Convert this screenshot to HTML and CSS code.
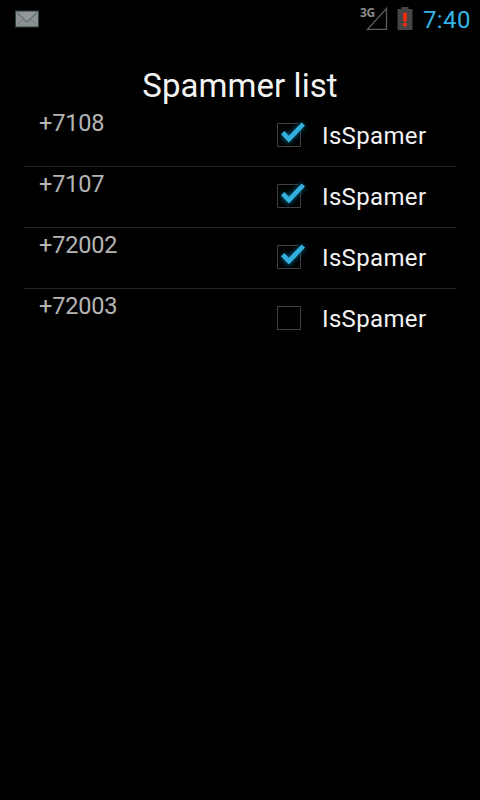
FILE: index.html
```html
<!DOCTYPE html>
<html lang="en">
<head>
<meta charset="utf-8">
<title>Spammer list</title>
<link rel="stylesheet" href="styles.css">
</head>
<body>
<svg class="defs" width="0" height="0" aria-hidden="true">
  <defs>
    <filter id="glow" x="-50%" y="-50%" width="200%" height="200%"><feGaussianBlur stdDeviation="2.6"/></filter>
    <symbol id="box" viewBox="0 0 48 48">
      <rect x="12.5" y="12.5" width="23" height="23" fill="none" stroke="#404040"/>
    </symbol>
    <symbol id="checked" viewBox="0 0 48 48">
      <path d="M35.5 20V35.5H12.5V12.5H33" fill="none" stroke="#404040"/>
      <path d="M18 22.5L23.5 28.5L38 13.5" fill="none" stroke="#08779f" stroke-width="6" opacity=".75" filter="url(#glow)"/>
      <path d="M17.7 21.7L23.9 28.2L38.3 13" fill="none" stroke="#33b0e0" stroke-width="4.7"/>
    </symbol>
  </defs>
</svg>
<header class="status">
  <svg class="mail" width="26" height="18" viewBox="0 0 26 18">
    <rect x="1.5" y="1" width="23" height="16" fill="#8b9090" stroke="#2c4344"/>
    <path d="M3 15L10 9M23 15L16 9" fill="none" stroke="#747c7c"/>
    <path d="M3 2.5L13 12L23 2.5" fill="#939898" stroke="#657071" stroke-width="1.2"/>
  </svg>
  <div class="signal">
    <span class="network">3G</span>
    <svg width="22" height="24" viewBox="0 0 22 24"><path d="M20.5 2.5V23.3H1.5Z" fill="none" stroke="#5c5c5c" stroke-width="1.3"/></svg>
  </div>
  <svg class="battery" width="16" height="24" viewBox="0 0 16 24">
    <path d="M4.5 0H11.5V2H15.5V23H.5V2H4.5Z" fill="#464444"/>
    <path d="M6 6H10L9.6 14.5H6.4ZM6.2 16H9.8V19.3H6.2Z" fill="#f52c0b"/>
  </svg>
  <span class="clock">7:40</span>
</header>
<main>
  <h1>Spammer list</h1>
  <ul class="list">
    <li><span class="phone">+7108</span><svg class="check"><use href="#checked"/></svg><span class="label">IsSpamer</span></li>
    <li><span class="phone">+7107</span><svg class="check"><use href="#checked"/></svg><span class="label">IsSpamer</span></li>
    <li><span class="phone">+72002</span><svg class="check"><use href="#checked"/></svg><span class="label">IsSpamer</span></li>
    <li><span class="phone">+72003</span><svg class="check"><use href="#box"/></svg><span class="label">IsSpamer</span></li>
  </ul>
</main>
</body>
</html>
```
FILE: styles.css
```css
* { box-sizing: border-box; }
body {
  margin: 0;
  min-height: 800px;
  background: #000;
  color: #f3f3f3;
  font-family: Roboto, sans-serif;
}
.defs { position: absolute; }
.status {
  display: flex;
  height: 38px;
  padding: 0 9px 0 14px;
}
.mail { margin: 10px auto 0 0; }
.signal {
  display: flex;
  padding-top: 6px;
  margin-right: 9px;
}
.network {
  width: 16px;
  margin-right: -10px;
  color: #8b8b8b;
  font: 700 12px/14px "Noto Sans", sans-serif;
  letter-spacing: -.4px;
}
.battery { margin: 7px 10px 0 0; }
.clock {
  color: #33b5e5;
  font-size: 24px;
  line-height: 40px;
  letter-spacing: .45px;
}
h1 {
  margin: 0;
  height: 68px;
  padding-top: 27px;
  font-size: 33px;
  line-height: 42px;
  font-weight: 400;
  text-align: center;
  letter-spacing: .05px;
}
.list {
  list-style: none;
  margin: 0 24px;
  padding: 0;
}
li {
  display: flex;
  height: 61px;
  padding-left: 15px;
  border-bottom: 1px solid #232323;
}
li:last-child { border-bottom: 0; }
.phone {
  width: 226px;
  color: #b5b5b5;
  font-size: 23.5px;
  line-height: 34px;
  letter-spacing: -.2px;
}
.check {
  width: 48px;
  height: 48px;
  margin-top: 5px;
}
.label {
  margin-left: 9px;
  font-size: 24px;
  line-height: 60px;
  letter-spacing: .35px;
}
```
